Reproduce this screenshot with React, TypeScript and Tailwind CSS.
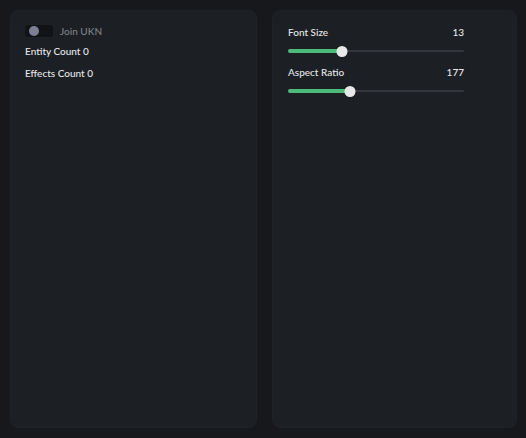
import React from 'react'

function Toggle({ label }: { label: string }) {
  const [on, setOn] = React.useState(false)
  return (
    <button type="button" className="flex h-[12px] items-center gap-[7px]" onClick={() => setOn(!on)}>
      <span className="flex h-[12px] w-[28px] items-center rounded-[3px] bg-[#111316] px-[4px]">
        <span className="h-[10px] w-[10px] rounded-full bg-[#7d8092]" />
      </span>
      <span className="text-[10px] leading-[12px] font-medium text-[#7f8287]">{label}</span>
    </button>
  )
}

function Slider({ label, value, pct }: { label: string; value: number; pct: number }) {
  return (
    <div className="flex flex-col">
      <div className="flex items-center justify-between text-[10px] leading-[12px] font-medium text-[#e6e7e9]">
        <span>{label}</span>
        <span>{value}</span>
      </div>
      <div className="relative mt-[8px] h-[10px]">
        <div className="absolute left-0 right-0 top-[4px] h-[2px] rounded-full bg-[#33363c]" />
        <div className="absolute left-0 top-[3px] h-[4px] rounded-full bg-[#4cbb78]" style={{ width: `${pct}%` }} />
        <div
          className="absolute top-[-0.5px] h-[11px] w-[11px] -translate-x-1/2 rounded-full bg-[#e8e8e8]"
          style={{ left: `${pct}%` }}
        />
      </div>
    </div>
  )
}

export default function App() {
  return (
    <div
      className="flex h-[438px] w-[526px] gap-[15px] bg-[#16181b] p-[10px]"
      style={{ fontFamily: 'Lato, "Noto Sans", sans-serif' }}
    >
      <section className="flex w-[247px] shrink-0 flex-col rounded-[8px] border border-[#1f2226] bg-[#1c1f23] px-[14px] py-[14px] text-[10px] leading-[12px] font-medium text-[#e6e7e9]">
        <Toggle label="Join UKN" />
        <div className="mt-[8px]">Entity Count 0</div>
        <div className="mt-[10px]">Effects Count 0</div>
      </section>
      <section className="flex w-[245px] shrink-0 flex-col rounded-[8px] border border-[#1f2226] bg-[#1c1f23] px-[15px] py-[15px]">
        <div className="flex w-[176px] flex-col gap-[10px]">
          <Slider label="Font Size" value={13} pct={30.7} />
          <Slider label="Aspect Ratio" value={177} pct={35.2} />
        </div>
      </section>
    </div>
  )
}
